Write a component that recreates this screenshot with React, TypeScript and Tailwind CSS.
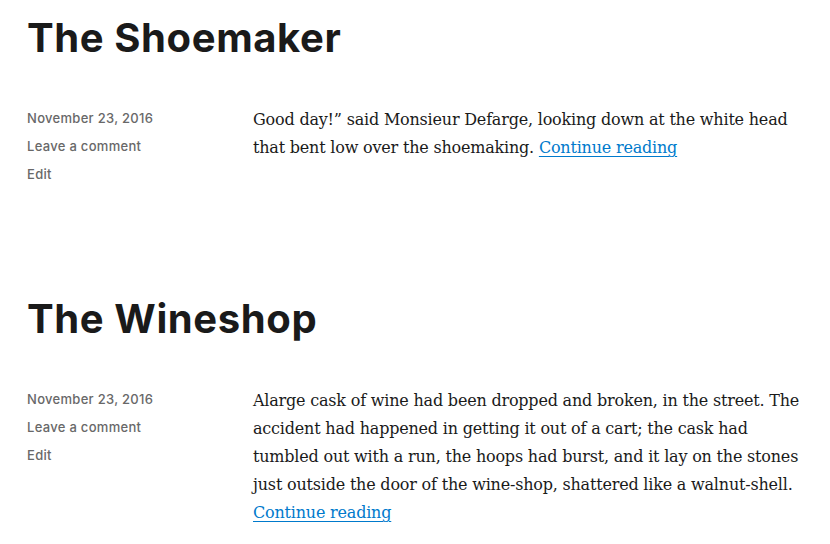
import React from 'react';

const posts = [
  {
    title: 'The Shoemaker',
    lines: [
      'Good day!” said Monsieur Defarge, looking down at the white head',
      'that bent low over the shoemaking.',
    ],
    inlineLink: true,
  },
  {
    title: 'The Wineshop',
    lines: [
      'Alarge cask of wine had been dropped and broken, in the street. The',
      'accident had happened in getting it out of a cart; the cask had',
      'tumbled out with a run, the hoops had burst, and it lay on the stones',
      'just outside the door of the wine-shop, shattered like a walnut-shell.',
    ],
    inlineLink: false,
  },
];

const App: React.FC = () => {
  return (
    <div className="w-[830px] h-[544px] overflow-hidden bg-white pl-[27px] pt-[13px]">
      {posts.map((post, idx) => (
        <article key={idx} className={idx === 0 ? 'h-[281px]' : ''}>
          <h2 className="font-['Inter',sans-serif] font-bold text-[40px] leading-[50px] text-[#1a1a1a] tracking-[0.6px]">
            {post.title}
          </h2>
          <div className="flex mt-[41px]">
            <div className="w-[226px] shrink-0 font-['Inter',sans-serif] font-medium text-[13px] leading-[28px] text-[#686868] tracking-[0.3px]">
              <div>November 23, 2016</div>
              <div>Leave a comment</div>
              <div>Edit</div>
            </div>
            <p className="w-[575px] pt-[2px] font-['DejaVu_Serif',serif] text-[16px] leading-[28px] text-[#1a1a1a] tracking-[-0.2px]">
              {post.lines.map((line, i) => (
                <React.Fragment key={i}>
                  {line}
                  {i < post.lines.length - 1 || !post.inlineLink ? <br /> : ' '}
                </React.Fragment>
              ))}
              <a href="#" className="text-[#007acc] underline underline-offset-[3px]">
                Continue reading
              </a>
            </p>
          </div>
        </article>
      ))}
    </div>
  );
};

export default App;
